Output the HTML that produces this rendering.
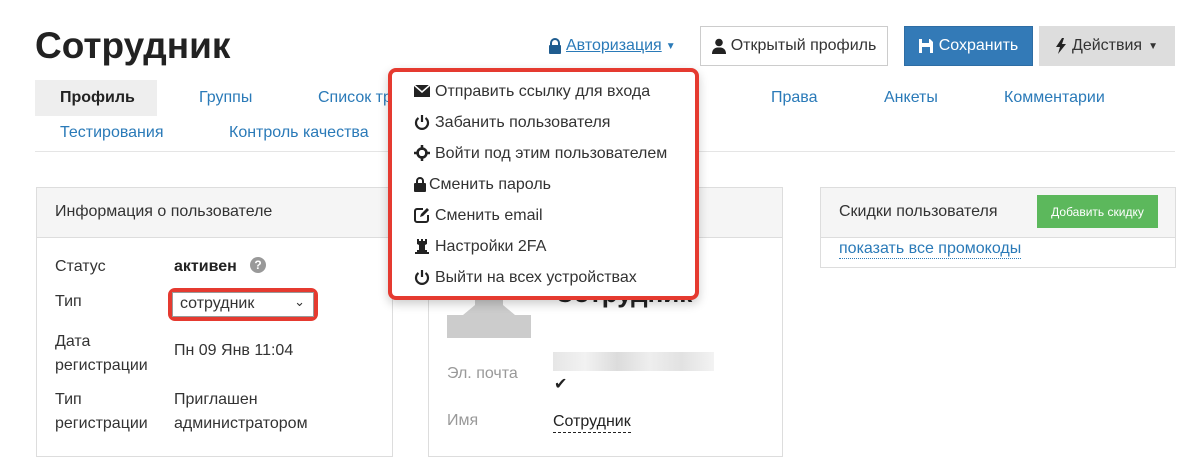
<!DOCTYPE html>
<html><head><meta charset="utf-8"><style>
*{box-sizing:border-box;margin:0;padding:0}
body{width:1199px;height:448px;overflow:hidden;background:#fff;font-family:"Liberation Sans","Noto Sans CJK SC",sans-serif;color:#333;font-size:16px;position:relative}
.a{position:absolute;white-space:nowrap}
.blue{color:#2a7ab8}
.btn{position:absolute;height:40px;top:26px;display:flex;align-items:center;justify-content:center;font-size:16px}
.panel{position:absolute;border:1px solid #ddd;background:#fff}
.ph{background:#f5f5f5;border-bottom:1px solid #ddd}
.dd{position:absolute;left:388px;top:68px;width:311px;height:232px;border:4px solid #e53a30;border-radius:8px;background:#fff;box-shadow:0 4px 10px rgba(0,0,0,.2)}
.dd div{position:absolute;left:22px;height:20px;font-size:16px;color:#333;display:flex;align-items:center;gap:5px;white-space:nowrap}
.dd svg{display:block;margin-top:-2px}
.ic{width:16px;height:16px}
</style></head><body>
<div class="a" style="left:35px;top:25px;font-size:37px;font-weight:bold;color:#222">Сотрудник</div>

<div class="a blue" style="left:548px;top:37px;display:flex;align-items:center;gap:4px">
<svg width="14" height="16" viewBox="0 0 14 16"><path d="M3 7V5a4 4 0 0 1 8 0v2" stroke="#1f5c8f" stroke-width="2" fill="none"/><rect x="1" y="7" width="12" height="9" rx="1" fill="#1f5c8f"/></svg>
<span style="text-decoration:underline">Авторизация</span><span style="font-size:10px">▼</span></div>
<div class="btn" style="left:700px;width:188px;border:1px solid #ccc;background:#fff;color:#333;gap:5px">
<svg width="14" height="16" viewBox="0 0 14 16"><circle cx="7" cy="4.5" r="3.8" fill="#222"/><path d="M0 16c0-5 3-6 5-6.5h4c2 .5 5 1.5 5 6.5z" fill="#222"/></svg>Открытый профиль</div>
<div class="btn" style="left:904px;width:129px;background:#337ab7;border:1px solid #2e6da4;color:#fff;gap:6px">
<svg width="14" height="14" viewBox="0 0 14 14"><path d="M0 0h11l3 3v11H0z" fill="#fff"/><rect x="3" y="0" width="7" height="4" fill="#337ab7"/><rect x="3" y="8" width="8" height="6" fill="#337ab7"/></svg>Сохранить</div>
<div class="btn" style="left:1039px;width:136px;background:#ddd;color:#333;gap:6px">
<svg width="10" height="16" viewBox="0 0 10 16"><path d="M6 0L0 9h4l-2 7 8-10H6l2-6z" fill="#222"/></svg>Действия <span style="font-size:10px">▼</span></div>

<div class="a" style="left:35px;top:80px;width:122px;height:36px;background:#eee"></div>
<div class="a" style="left:60px;top:89px;font-weight:bold;color:#222">Профиль</div>
<div class="a blue" style="left:199px;top:89px">Группы</div>
<div class="a blue" style="left:318px;top:89px">Список тр</div>
<div class="a blue" style="left:771px;top:89px">Права</div>
<div class="a blue" style="left:884px;top:89px">Анкеты</div>
<div class="a blue" style="left:1004px;top:89px">Комментарии</div>
<div class="a blue" style="left:60px;top:124px">Тестирования</div>
<div class="a blue" style="left:229px;top:124px">Контроль качества</div>
<div class="a" style="left:35px;top:151px;width:1140px;height:1px;background:#e5e5e5"></div>

<div class="panel" style="left:36px;top:187px;width:357px;height:270px">
<div class="ph" style="height:50px;padding:15px 18px;font-size:16px">Информация о пользователе</div></div>
<div class="a" style="left:55px;top:258px">Статус</div>
<div class="a" style="left:174px;top:258px;font-weight:bold;color:#222">активен</div>
<div class="a" style="left:250px;top:257px;width:16px;height:16px;border-radius:50%;background:#999;color:#fff;font-size:12px;font-weight:bold;text-align:center;line-height:16px">?</div>
<div class="a" style="left:55px;top:293px">Тип</div>
<div class="a" style="left:168px;top:288px;width:150px;height:33px;border:4px solid #e53a30;border-radius:7px"></div>
<div class="a" style="left:172px;top:292px;width:142px;height:25px;border:1px solid #999;background:#fff;padding:2px 7px;font-size:16px">сотрудник<span style="position:absolute;right:8px;top:1px;font-size:13px">⌄</span></div>
<div class="a" style="left:55px;top:330px;line-height:24px">Дата<br>регистрации</div>
<div class="a" style="left:174px;top:342px">Пн 09 Янв 11:04</div>
<div class="a" style="left:55px;top:388px;line-height:24px">Тип<br>регистрации</div>
<div class="a" style="left:174px;top:388px;line-height:24px">Приглашен<br>администратором</div>

<div class="panel" style="left:428px;top:187px;width:355px;height:270px">
<div class="ph" style="height:50px"></div></div>
<svg class="a" style="left:447px;top:285px" width="84" height="53" viewBox="0 0 84 53"><path d="M28 0h28v20l12 10h16v23H0V30h16l12-10z" fill="#ccc"/></svg>
<div class="a" style="left:555px;top:278px;font-size:26px;font-weight:bold;color:#222">Сотрудник</div>
<div class="a" style="left:447px;top:365px;color:#999">Эл. почта</div>
<div class="a" style="left:553px;top:352px;width:161px;height:19px;background:linear-gradient(90deg,#e6e6e6,#f2f2f2,#dcdcdc,#eee,#e2e2e2,#f3f3f3)"></div>
<div class="a" style="left:554px;top:374px;font-size:16px;color:#222">✔</div>
<div class="a" style="left:447px;top:412px;color:#999">Имя</div>
<div class="a" style="left:553px;top:412px;color:#222;border-bottom:1px dashed #222;line-height:20px">Сотрудник</div>

<div class="panel" style="left:820px;top:187px;width:356px;height:81px">
<div class="ph" style="height:50px;position:relative"><span style="position:absolute;left:18px;top:15px">Скидки пользователя</span>
<div style="position:absolute;left:216px;top:7px;width:121px;height:33px;background:#5cb85c;color:#fff;font-size:12px;display:flex;align-items:center;justify-content:center">Добавить скидку</div></div>
<span class="a blue" style="left:18px;top:51px;border-bottom:1px dotted #2a7ab8;line-height:19px">показать все промокоды</span></div>

<div class="dd">
<div style="top:10px"><svg class="ic" viewBox="0 0 16 16"><path d="M0 2h16v12H0z" fill="#222"/><path d="M0 2l8 7 8-7" stroke="#fff" stroke-width="1.5" fill="none"/></svg>Отправить ссылку для входа</div>
<div style="top:41px"><svg class="ic" viewBox="0 0 16 16"><path d="M4.5 4a6 6 0 1 0 7 0" stroke="#222" stroke-width="2.2" fill="none"/><path d="M8 1v7" stroke="#222" stroke-width="2.2"/></svg>Забанить пользователя</div>
<div style="top:72px"><svg class="ic" viewBox="0 0 16 16"><circle cx="8" cy="8" r="4.5" stroke="#222" stroke-width="2.5" fill="none"/><path d="M8 0v5M8 11v5M0 8h5M11 8h5" stroke="#222" stroke-width="2.5"/></svg>Войти под этим пользователем</div>
<div style="top:103px;gap:3px"><svg width="12" height="15" viewBox="0 0 12 15"><path d="M3 6V4a3 3 0 0 1 6 0v2" stroke="#222" stroke-width="2" fill="none"/><rect x="0" y="6" width="12" height="9" rx="1" fill="#222"/></svg>Сменить пароль</div>
<div style="top:134px"><svg class="ic" viewBox="0 0 16 16"><path d="M9 2H3a2 2 0 0 0-2 2v9a2 2 0 0 0 2 2h9a2 2 0 0 0 2-2V8" stroke="#222" stroke-width="2" fill="none"/><path d="M6 10l1-3 6-6 2 2-6 6z" fill="#222"/></svg>Сменить email</div>
<div style="top:165px"><svg class="ic" viewBox="0 0 16 16"><path d="M3 1h2v2h2V1h2v2h2V1h2v5l-2 1v5h2v2H3v-2h2V7L3 6zM1 14h14v2H1z" fill="#222"/></svg>Настройки 2FA</div>
<div style="top:196px"><svg class="ic" viewBox="0 0 16 16"><path d="M4.5 4a6 6 0 1 0 7 0" stroke="#222" stroke-width="2.2" fill="none"/><path d="M8 1v7" stroke="#222" stroke-width="2.2"/></svg>Выйти на всех устройствах</div>
</div>
</body></html>
